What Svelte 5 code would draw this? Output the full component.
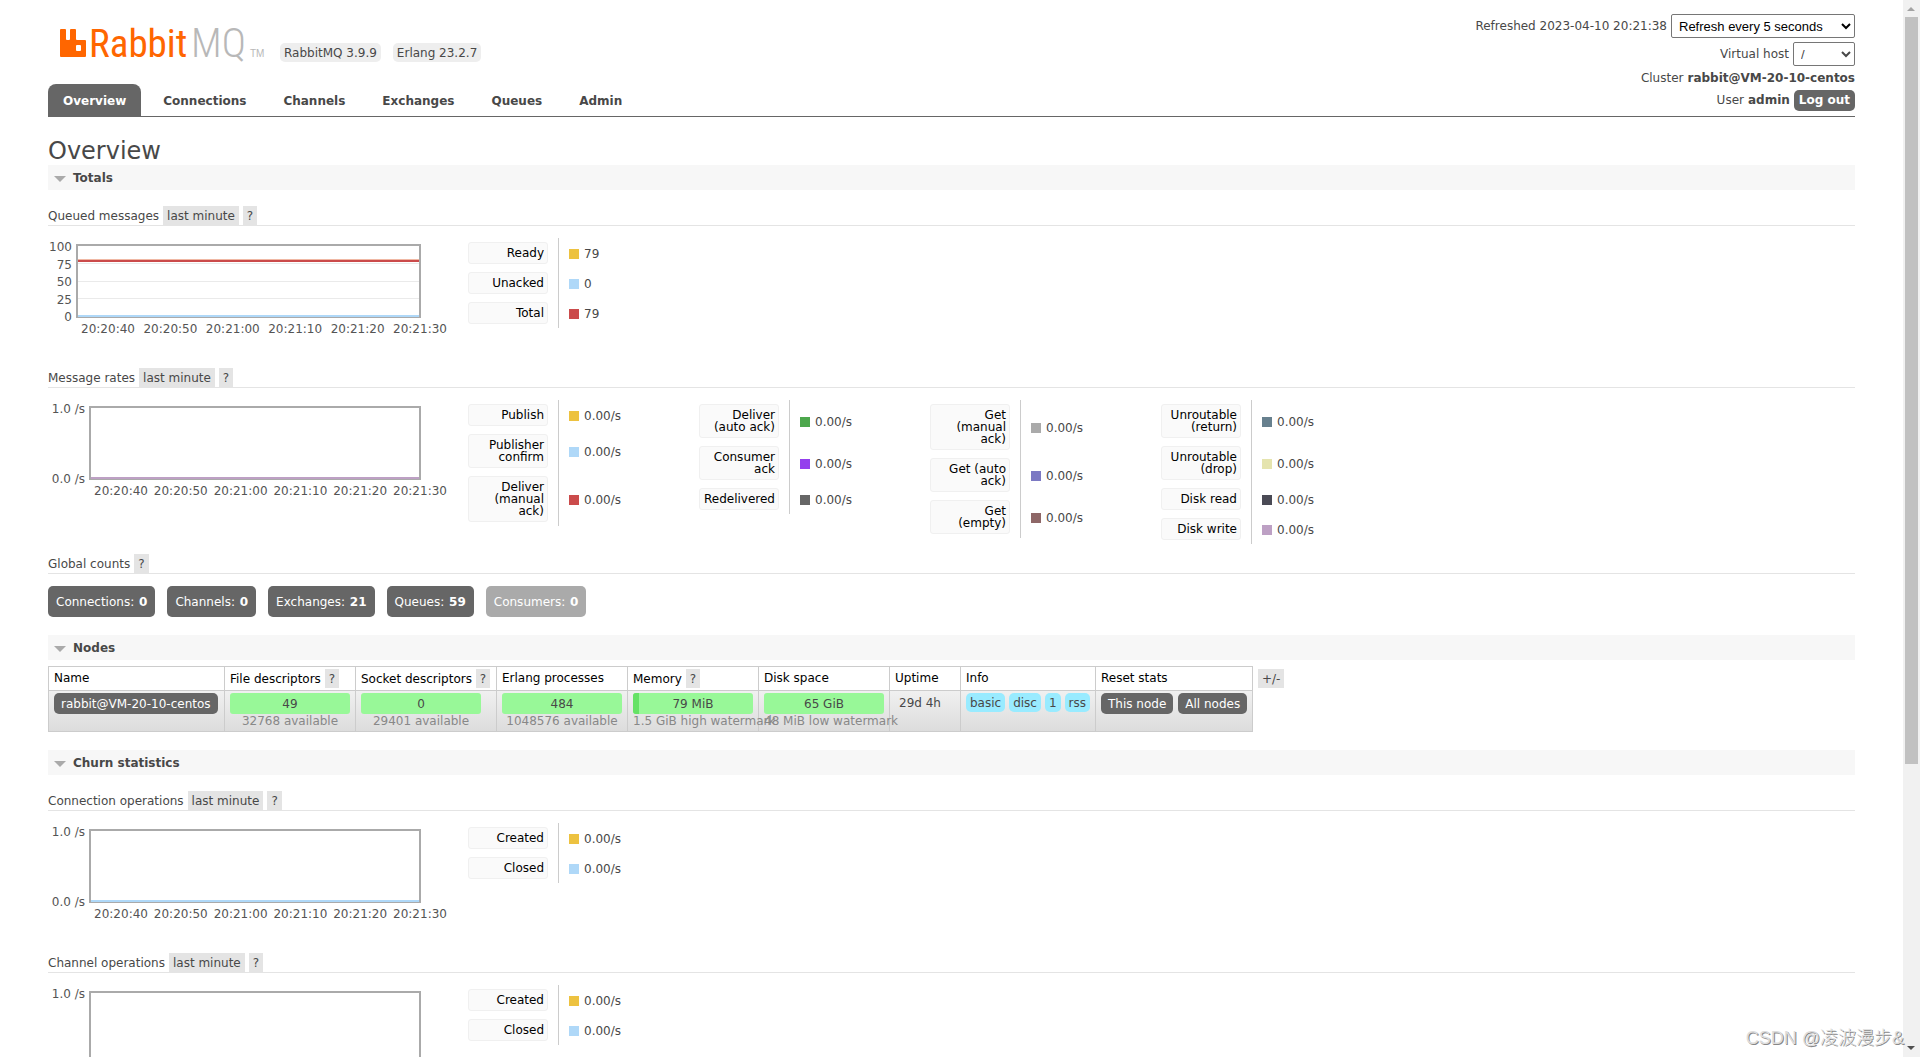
<script lang="ts">
    type Item = { label: string; color: string; value: string };
    type Line = { color: string; y: number };
    type Stat = {
        title: string;
        yLabels: string[];
        left: number;
        lines: Line[];
        legend: Item[][];
    };

    const times = ["20:20:40", "20:20:50", "20:21:00", "20:21:10", "20:21:20", "20:21:30"];
    const tabs = ["Overview", "Connections", "Channels", "Exchanges", "Queues", "Admin"];
    let current = $state("Overview");
    let refresh = $state("5");

    const item = (label: string, color: string, value = "0.00/s"): Item => ({ label, color, value });

    const queued: Stat = {
        title: "Queued messages",
        yLabels: ["100", "75", "50", "25", "0"],
        left: 28,
        lines: [
            { color: "#f0b8a4", y: 22 },
            { color: "#cb4b4b", y: 23 },
            { color: "#afd8f8", y: 78 },
        ],
        legend: [[item("Ready", "#edc240", "79"), item("Unacked", "#afd8f8", "0"), item("Total", "#cb4b4b", "79")]],
    };

    const rates: Stat = {
        title: "Message rates",
        yLabels: ["1.0 /s", "0.0 /s"],
        left: 41,
        lines: [{ color: "#bda0c4", y: 78 }],
        legend: [
            [
                item("Publish", "#edc240"),
                item("Publisher confirm", "#afd8f8"),
                item("Deliver (manual ack)", "#cb4b4b"),
            ],
            [
                item("Deliver (auto ack)", "#4da74d"),
                item("Consumer ack", "#9440ed"),
                item("Redelivered", "#666666"),
            ],
            [
                item("Get (manual ack)", "#aaaaaa"),
                item("Get (auto ack)", "#7c79c3"),
                item("Get (empty)", "#8e6767"),
            ],
            [
                item("Unroutable (return)", "#67808e"),
                item("Unroutable (drop)", "#e5e4ae"),
                item("Disk read", "#4a4a55"),
                item("Disk write", "#bda0c4"),
            ],
        ],
    };

    const churn: Stat[] = ["Connection operations", "Channel operations"].map((title) => ({
        title,
        yLabels: ["1.0 /s", "0.0 /s"],
        left: 41,
        lines: [{ color: "#afd8f8", y: 78 }],
        legend: [[item("Created", "#edc240"), item("Closed", "#afd8f8")]],
    }));

    const counts = [
        { name: "Connections", n: 0 },
        { name: "Channels", n: 0 },
        { name: "Exchanges", n: 21 },
        { name: "Queues", n: 59 },
        { name: "Consumers", n: 0, disabled: true },
    ];

    const columns = [
        { name: "Name", width: 176 },
        { name: "File descriptors", width: 131, help: true },
        { name: "Socket descriptors", width: 141, help: true },
        { name: "Erlang processes", width: 131 },
        { name: "Memory", width: 131, help: true },
        { name: "Disk space", width: 131 },
        { name: "Uptime", width: 71 },
        { name: "Info", width: 135 },
        { name: "Reset stats", width: 157 },
    ];

    const bars = [
        { value: "49", sub: "32768 available", used: 0 },
        { value: "0", sub: "29401 available", used: 0 },
        { value: "484", sub: "1048576 available", used: 0 },
        { value: "79 MiB", sub: "1.5 GiB high watermark", used: 5, long: true },
        { value: "65 GiB", sub: "48 MiB low watermark", used: 0, long: true },
    ];

    const xLabel = (left: number, i: number) => {
        const first = left + 32;
        return first + ((372 - first) * i) / (times.length - 1);
    };
    const yLabel = (count: number, i: number) => 13 + (70 * i) / (count - 1);
</script>

{#snippet stat(s: Stat)}
    <h3>
        {s.title}
        <button class="tag">last minute</button>
        <button class="tag">?</button>
    </h3>
    <div class="stats">
        <svg class="chart" width="420" height="120" role="img" aria-label={s.title}>
            <rect x={s.left + 1} y="7" width={371 - s.left} height="72" fill="#fff" stroke="#aaa" stroke-width="2" />
            {#if s.yLabels.length > 2}
                {#each [25, 43, 60] as y}
                    <rect x={s.left + 2} {y} width={369 - s.left} height="1" fill="#eaeaea" />
                {/each}
            {/if}
            {#each s.lines as line}
                <rect x={s.left + 2} y={line.y - 1} width={369 - s.left} height="2" fill={line.color} />
            {/each}
            {#each s.yLabels as text, i}
                <text x={s.left - 4} y={yLabel(s.yLabels.length, i)} text-anchor="end">{text}</text>
            {/each}
            {#each times as time, i}
                <text x={xLabel(s.left, i)} y="95" text-anchor="middle">{time}</text>
            {/each}
        </svg>
        {#each s.legend as group}
            <div class="legend">
                <table>
                    <tbody>
                        {#each group as entry}
                            <tr>
                                <th><button class="key">{entry.label}</button></th>
                                <td>
                                    <div class="rate">
                                        <i style:background={entry.color}></i>{entry.value}
                                    </div>
                                </td>
                            </tr>
                        {/each}
                    </tbody>
                </table>
            </div>
        {/each}
    </div>
{/snippet}

<div class="page">
    <header>
        <div class="left">
            <div class="brand">
                <a class="logo" href="#/" aria-label="RabbitMQ">
                    <svg width="208" height="50" viewBox="0 0 208 50">
                        <path
                            fill="#f60"
                            fill-rule="evenodd"
                            d="M1 17h4q1 0 1 1v9q0 1 1 1h2q1 0 1-1v-9q0-1 1-1h4q1 0 1 1v9q0 1 1 1h8q1 0 1 1v15q0 1-1 1H1q-1 0-1-1V18q0-1 1-1zM16 34v4q0 1 1 1h3q1 0 1-1v-4q0-1-1-1h-3q-1 0-1 1z"
                        />
                        <text class="word" x="29" y="45" fill="#f60">Rabbit</text>
                        <text class="word thin" x="131" y="45" fill="#b8b8b8">MQ</text>
                        <text class="tm" x="190" y="45" fill="#b8b8b8">TM</text>
                    </svg>
                </a>
                <span class="version">RabbitMQ 3.9.9</span>
                <span class="version">Erlang 23.2.7</span>
            </div>
            <nav>
                {#each tabs as tab}
                    <a href="#/{tab.toLowerCase()}" class:selected={tab === current} onclick={() => (current = tab)}>
                        {tab}
                    </a>
                {/each}
            </nav>
        </div>
        <div class="login">
            <div class="row">
                <label for="refresh">Refreshed 2023-04-10 20:21:38</label>
                <select id="refresh" bind:value={refresh}>
                    <option value="5">Refresh every 5 seconds</option>
                    <option value="10">Refresh every 10 seconds</option>
                    <option value="30">Refresh every 30 seconds</option>
                    <option value="">Do not refresh</option>
                </select>
            </div>
            <div class="row">
                <label for="vhost">Virtual host</label>
                <select id="vhost" class="vhost">
                    <option>/</option>
                    <option>All</option>
                </select>
            </div>
            <div class="row text">Cluster <b>rabbit@VM-20-10-centos</b></div>
            <div class="row">User <b>admin</b> <button class="dark">Log out</button></div>
        </div>
    </header>

    <main>
        <h1>Overview</h1>

        <h2><button class="toggle">Totals</button></h2>
        <section>
            {@render stat(queued)}
            {@render stat(rates)}
            <h3>Global counts <button class="tag">?</button></h3>
            <div class="counts">
                {#each counts as count}
                    <a href="#/{count.name.toLowerCase()}" class:disabled={count.disabled}>
                        {count.name}: <b>{count.n}</b>
                    </a>
                {/each}
            </div>
        </section>

        <h2><button class="toggle">Nodes</button></h2>
        <div class="nodes">
            <table class="list">
                <colgroup>
                    {#each columns as column}
                        <col style:width="{column.width}px" />
                    {/each}
                </colgroup>
                <thead>
                    <tr>
                        {#each columns as column}
                            <th>
                                {column.name}
                                {#if column.help}<button class="tag">?</button>{/if}
                            </th>
                        {/each}
                    </tr>
                </thead>
                <tbody>
                    <tr>
                        <td><a class="dark" href="#/nodes">rabbit@VM-20-10-centos</a></td>
                        {#each bars as bar}
                            <td>
                                <div class="bar">
                                    <div class="used" style:width="{bar.used}%"></div>
                                    <span>{bar.value}</span>
                                </div>
                                <div class="sub" class:long={bar.long}>{bar.sub}</div>
                            </td>
                        {/each}
                        <td class="uptime">29d 4h</td>
                        <td>
                            <div class="group infos">
                                {#each ["basic", "disc", "1", "rss"] as info}
                                    <span class="info">{info}</span>
                                {/each}
                            </div>
                        </td>
                        <td>
                            <div class="group">
                                <button class="dark">This node</button>
                                <button class="dark">All nodes</button>
                            </div>
                        </td>
                    </tr>
                </tbody>
            </table>
            <button class="tag">+/-</button>
        </div>

        <h2><button class="toggle">Churn statistics</button></h2>
        <section>
            {#each churn as s}
                {@render stat(s)}
            {/each}
        </section>
    </main>

    <div class="scrollbar">
        <svg width="17" height="17" viewBox="0 0 17 17"><path fill="#a3a3a3" d="M4 11h8L8 7z" /></svg>
        <div class="track"><div class="thumb"></div></div>
        <svg width="17" height="17" viewBox="0 0 17 17"><path fill="#505050" d="M4 6h8l-4 4z" /></svg>
    </div>
    <div class="watermark">CSDN @凌波漫步&amp;</div>
</div>

<style>
    :global(body) {
        background: #fff;
        overflow: hidden;
    }

    .page {
        position: relative;
        box-sizing: border-box;
        height: 100vh;
        overflow: hidden;
        padding: 0 65px 0 48px;
        font-family: Verdana, "DejaVu Sans", sans-serif;
        font-size: 12px;
        line-height: 15px;
        color: #484848;
    }

    button {
        border: 0;
        font: inherit;
        color: inherit;
        cursor: pointer;
    }

    a {
        color: inherit;
        text-decoration: none;
    }

    header {
        display: flex;
        justify-content: space-between;
        border-bottom: 1px solid #666;
    }

    .left {
        display: flex;
        flex-direction: column;
        justify-content: space-between;
    }

    .brand {
        display: flex;
        align-items: flex-end;
        gap: 12px;
        padding: 12px 0 0 12px;
    }

    .logo svg {
        display: block;
        overflow: visible;
    }

    .word {
        font-family: "Liberation Sans Narrow", "Roboto Condensed", "Open Sans Condensed", sans-serif;
        font-size: 39px;
    }

    .thin {
        font-size: 41px;
        font-weight: 300;
    }

    .tm {
        font-family: "Liberation Sans", sans-serif;
        font-size: 10px;
    }

    .version {
        padding: 3px 4px 1px;
        border-radius: 5px;
        background: #eee;
    }

    nav {
        display: flex;
        gap: 7px;
        font-weight: bold;
    }

    nav a {
        padding: 10px 15px 7px;
        border-radius: 8px 8px 0 0;
    }

    nav a.selected {
        background: #666;
        color: #fff;
    }

    .login {
        display: flex;
        flex-direction: column;
        align-items: flex-end;
        gap: 4px;
        padding: 14px 0 5px;
    }

    .row {
        display: flex;
        align-items: center;
        gap: 4px;
    }

    .text {
        padding-top: 1px;
    }

    select {
        box-sizing: border-box;
        width: 184px;
        height: 24px;
        padding: 0 3px;
        border: 1px solid #767676;
        border-radius: 2px;
        background: #fff;
        font-family: "Liberation Sans", Arial, sans-serif;
        font-size: 13px;
        color: #000;
    }

    .vhost {
        width: 62px;
        color: #484848;
    }

    .dark {
        display: inline-block;
        padding: 3px 7px;
        border-radius: 5px;
        background: #666;
        color: #fff;
    }

    .row .dark {
        padding: 3px 5px;
        font-weight: bold;
    }

    h1 {
        margin: 0;
        padding: 21px 0 0;
        font-size: 24px;
        font-weight: normal;
        line-height: 27px;
    }

    h2 {
        margin: 0 0 16px;
        background: #f7f7f7;
        font-size: 12px;
        line-height: 15px;
    }

    .toggle {
        display: flex;
        align-items: center;
        gap: 7px;
        width: 100%;
        padding: 6px 6px 4px;
        background: none;
        font-weight: bold;
    }

    .toggle::before {
        content: "";
        border: 6px solid transparent;
        border-top-color: #aaa;
        border-bottom: 0;
    }

    h3 {
        display: flex;
        align-items: baseline;
        gap: 4px;
        margin: 0 0 12px;
        border-bottom: 1px solid #e4e4e4;
        font-size: 12px;
        font-weight: normal;
    }

    .tag {
        padding: 3px 4px 1px;
        background: #e4e4e4;
    }

    .stats {
        display: flex;
        align-items: flex-start;
        min-height: 120px;
        margin-bottom: 10px;
    }

    .chart {
        flex: none;
        font-size: 12px;
    }

    .chart text {
        fill: #545454;
    }

    .legend {
        flex: none;
        width: 231px;
    }

    .legend table {
        border-collapse: collapse;
    }

    .legend th {
        padding: 4px 10px 4px 0;
        font-weight: normal;
    }

    .legend td {
        padding: 2px 0 0 10px;
        border-left: 1px solid #ccc;
    }

    .key {
        display: block;
        box-sizing: border-box;
        width: 80px;
        padding: 4px 3px;
        border: 1px solid #f0f0f0;
        border-radius: 3px;
        background: #fafafa;
        color: #000;
        line-height: 12px;
        text-align: right;
    }

    .rate {
        display: flex;
        align-items: center;
        gap: 5px;
    }

    .rate i {
        width: 10px;
        height: 10px;
    }

    .counts {
        display: flex;
        gap: 12px;
        margin-bottom: 18px;
    }

    .counts a {
        padding: 9px 8px 7px;
        border-radius: 5px;
        background: #666;
        color: #fff;
    }

    .counts b {
        margin-left: 1px;
    }

    .counts .disabled {
        background: #aaa;
    }

    .nodes {
        display: flex;
        align-items: flex-start;
        gap: 5px;
        margin: -10px 0 18px;
    }

    .nodes > .tag {
        margin-top: 3px;
    }

    .list {
        width: 1205px;
        table-layout: fixed;
        border-collapse: collapse;
    }

    .list th {
        height: 19px;
        padding: 2px 5px;
        border: 1px solid #ccc;
        color: #000;
        font-weight: normal;
        text-align: left;
        white-space: nowrap;
    }

    .list .tag {
        color: #484848;
    }

    .list tbody tr {
        background: linear-gradient(#f0f0f0, #dcdcdc);
    }

    .list td {
        padding: 2px 5px;
        border: 1px solid #ccc;
        vertical-align: top;
        white-space: nowrap;
    }

    .list .dark,
    .bar {
        padding-top: 4px;
        padding-bottom: 2px;
    }

    .bar {
        position: relative;
        width: 120px;
        border-radius: 3px;
        background: #98f898;
        text-align: center;
        overflow: hidden;
    }

    .used {
        position: absolute;
        inset: 0 auto 0 0;
        background: #66e266;
    }

    .bar span {
        position: relative;
    }

    .sub {
        width: 120px;
        color: #888;
        text-align: center;
    }

    .sub.long {
        text-align: left;
    }

    .list .uptime {
        padding: 5px 9px;
    }

    .group {
        display: flex;
        align-items: flex-start;
        gap: 5px;
    }

    .infos {
        gap: 4px;
    }

    .info {
        padding: 3px 4px 1px;
        border-radius: 5px;
        background: #99ebff;
    }

    .scrollbar {
        position: absolute;
        inset: 0 0 0 auto;
        display: flex;
        flex-direction: column;
        width: 17px;
        background: #f1f1f1;
    }

    .scrollbar svg {
        display: block;
    }

    .track {
        flex: 1;
    }

    .thumb {
        width: 13px;
        height: 73%;
        margin: 0 2px;
        background: #c1c1c1;
    }

    .watermark {
        position: absolute;
        right: 16px;
        bottom: 7px;
        font-family: "Liberation Sans", "Noto Sans CJK SC", sans-serif;
        font-size: 18px;
        font-weight: 300;
        line-height: 24px;
        color: #ddd;
        text-shadow: 1px 1px 0 #888;
    }
</style>
